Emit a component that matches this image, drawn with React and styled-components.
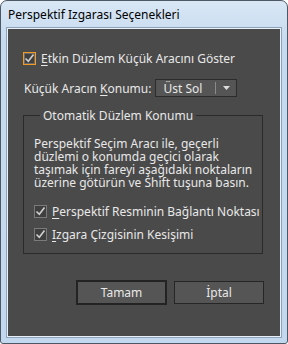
import React from 'react'
import styled, {createGlobalStyle} from 'styled-components'

const Global = createGlobalStyle`
html,body{margin:0;padding:0;background:#fff;}
body{font-family:"Noto Sans","Open Sans",sans-serif;}
`;

const Window = styled.div`
box-sizing:border-box;
width:288px;
height:344px;
border:1px solid #4d5866;
border-radius:7px 7px 3px 3px;
background:linear-gradient(#d9e7f5,#c6daef 40px,#c3d8ee);
display:flex;
flex-direction:column;
padding:0 6px 6px 6px;
`;

const TitleBar = styled.div`
height:27px;
display:flex;
align-items:center;
padding-left:1px;
font-family:"Noto Sans",sans-serif;
font-size:12px;
color:#000;
`;

const Body = styled.div`
flex:1;
background:#4a4a4a;
border:1px solid #e8f0f8;
outline:1px solid #8ea3ba;
display:flex;
flex-direction:column;
padding:21px 0 0 15px;
color:#e8e8e8;
font-size:12px;
`;

const Row = styled.label`
display:flex;
align-items:center;
height:16px;
gap:5px;
white-space:nowrap;
`;

const Box = styled.span`
box-sizing:border-box;
width:13px;
height:13px;
border:1px solid ${p=>p.focus ? '#f39a21' : '#7a7a7a'};
background:#3f3f3f;
display:flex;
align-items:center;
justify-content:center;
box-shadow:${p=>p.focus ? 'inset 0 0 0 1px #6a6a6a' : 'none'};
`;

const U = styled.span`
text-decoration:underline;
text-underline-offset:2px;
`;

const SelectRow = styled.div`
display:flex;
align-items:center;
margin-top:13px;
gap:4px;
padding-left:1px;
`;

const Select = styled.div`
box-sizing:border-box;
width:82px;
height:18px;
background:#555;
border:1px solid #2c2c2c;
display:flex;
align-items:center;
padding-left:7px;
`;

const SelectText = styled.span`
flex:1;
`;

const Divider = styled.span`
width:1px;
height:12px;
background:#8a8a8a;
`;

const Arrow = styled.span`
width:20px;
display:flex;
justify-content:center;
`;

const Group = styled.fieldset`
margin:10px 0 0 0;
width:240px;
box-sizing:border-box;
border:1px solid #2a2a2a;
padding:13px 0 11px 10px;
`;

const Legend = styled.legend`
padding:0 3px;
margin-left:6px;
`;

const Para = styled.p`
margin:0 0 14px 0;
line-height:13px;
`;

const Checks = styled.div`
display:flex;
flex-direction:column;
gap:7px;
`;

const Buttons = styled.div`
display:flex;
gap:7px;
margin-top:26px;
padding-left:53px;
`;

const Button = styled.div`
box-sizing:border-box;
width:${p=>p.primary ? '91px' : '90px'};
height:${p=>p.primary ? '25px' : '23px'};
margin-top:${p=>p.primary ? '0' : '1px'};
background:#555;
border:${p=>p.primary ? '2px solid #232323' : '1px solid #262626'};
display:flex;
align-items:center;
justify-content:center;
color:#e8e8e8;
`;

const Check = () => (
  <svg width="11" height="11" viewBox="0 0 11 11">
    <path d="M1.5 5.5 L4.3 8.3 L9.5 1.5" fill="none" stroke="#d0d0d0" strokeWidth="1.6"/>
  </svg>
)

const CheckRow = ({focus,children}) => (
  <Row>
    <Box focus={focus}><Check/></Box>
    <span>{children}</span>
  </Row>
)

export default function App(){
  return(
    <>
      <Global/>
      <Window>
        <TitleBar>Perspektif Izgarası Seçenekleri</TitleBar>
        <Body>
          <CheckRow focus><U>E</U>tkin Düzlem Küçük Aracını Göster</CheckRow>
          <SelectRow>
            <span>Küçük Aracın <U>K</U>onumu:</span>
            <Select>
              <SelectText>Üst Sol</SelectText>
              <Divider/>
              <Arrow>
                <svg width="7" height="4" viewBox="0 0 7 4"><path d="M0 0H7L3.5 4Z" fill="#ddd"/></svg>
              </Arrow>
            </Select>
          </SelectRow>
          <Group>
            <Legend>Otomatik Düzlem Konumu</Legend>
            <Para>Perspektif Seçim Aracı ile, geçerli düzlemi o konumda geçici olarak taşımak için fareyi aşağıdaki noktaların üzerine götürün ve Shift tuşuna basın.</Para>
            <Checks>
              <CheckRow><U>P</U>erspektif Resminin Bağlantı Noktası</CheckRow>
              <CheckRow><U>I</U>zgara Çizgisinin Kesişimi</CheckRow>
            </Checks>
          </Group>
          <Buttons>
            <Button primary>Tamam</Button>
            <Button>İptal</Button>
          </Buttons>
        </Body>
      </Window>
    </>
  )
}
